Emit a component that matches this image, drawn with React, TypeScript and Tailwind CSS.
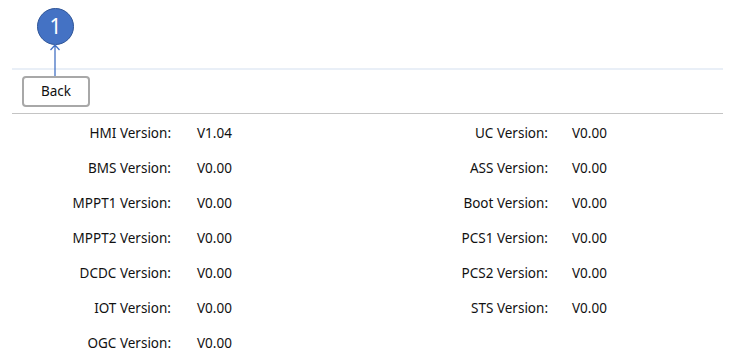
const left = [
  ['HMI Version:', 'V1.04'],
  ['BMS Version:', 'V0.00'],
  ['MPPT1 Version:', 'V0.00'],
  ['MPPT2 Version:', 'V0.00'],
  ['DCDC Version:', 'V0.00'],
  ['IOT Version:', 'V0.00'],
  ['OGC Version:', 'V0.00'],
];

const right = [
  ['UC Version:', 'V0.00'],
  ['ASS Version:', 'V0.00'],
  ['Boot Version:', 'V0.00'],
  ['PCS1 Version:', 'V0.00'],
  ['PCS2 Version:', 'V0.00'],
  ['STS Version:', 'V0.00'],
];

export default function App() {
  return (
    <div
      className="relative w-[743px] h-[364px] bg-white text-[#111] overflow-hidden"
      style={{ fontFamily: '"Noto Sans", "Open Sans", sans-serif' }}
    >
      {/* annotation marker */}
      <div className="absolute left-[37px] top-[8px] w-[37px] h-[37px] rounded-full bg-[#4472c4] border-[1.5px] border-[#2f5597] flex items-center justify-center text-white text-[21px] leading-none">
        1
      </div>
      <svg className="absolute left-[49px] top-[44px]" width="12" height="32" viewBox="0 0 12 32">
        <path d="M6 1 V32 M1.5 6 L6 1 L10.5 6" fill="none" stroke="#4472c4" strokeWidth="1.3" />
      </svg>

      <div className="pt-[68px] ml-[12px] mr-[20px]">
        <div className="h-[2px] bg-[#e9eff7]" />
        <div className="h-[43px] pl-[10px] pt-[6px]">
          <button className="w-[68px] h-[31px] border-2 border-[#a8a8a8] rounded-[4px] bg-white text-[13.5px] text-[#111] flex items-center justify-center">
            Back
          </button>
        </div>
        <div className="h-[1px] bg-[#c4c4c4]" />

        <div className="grid grid-cols-[159px_217px_160px_1fr] text-[13.5px] pt-[2px]">
          {left.map(([label, value], i) => (
            <div key={label} className="contents">
              <div className="h-[35px] flex items-center justify-end">{label}</div>
              <div className="h-[35px] flex items-center pl-[26px]">{value}</div>
              <div className="h-[35px] flex items-center justify-end">{right[i]?.[0]}</div>
              <div className="h-[35px] flex items-center pl-[24px]">{right[i]?.[1]}</div>
            </div>
          ))}
        </div>
      </div>
    </div>
  );
}
